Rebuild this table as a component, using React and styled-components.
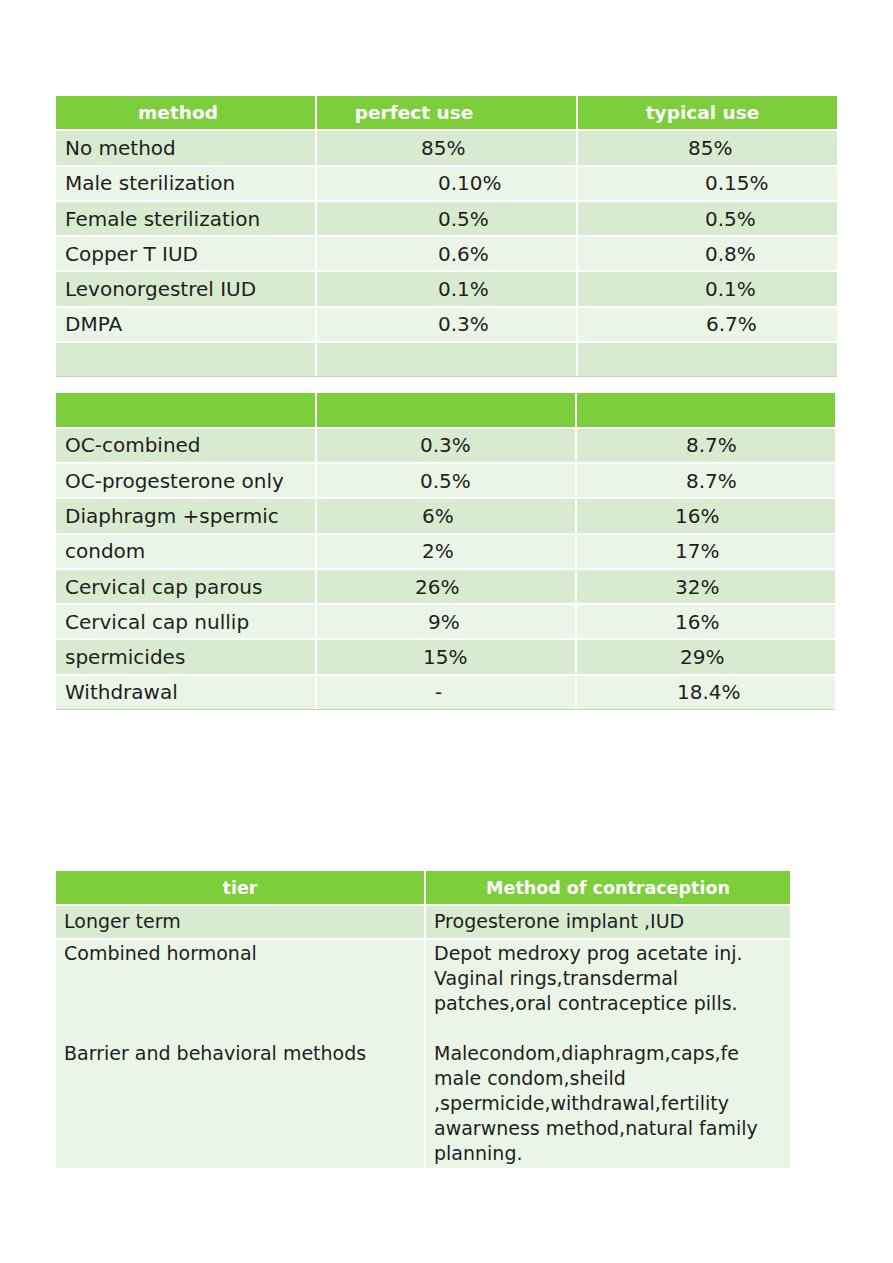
import { Fragment } from "react";
import styled, { createGlobalStyle } from "styled-components";

const GlobalStyle = createGlobalStyle`
    html, body {
        margin: 0;
        padding: 0;
        background: #ffffff;
    }
    body {
        font-family: "DejaVu Sans", "Liberation Sans", sans-serif;
        color: #1e1e1e;
    }
`;

const GREEN = "#7dce3b";
const DARK = "#d8ebd0";
const LIGHT = "#ebf5e7";

const Page = styled.div`
    display: flex;
    flex-direction: column;
    align-items: flex-start;
    padding: 96px 0 80px 56px;
`;

const Table = styled.div`
    display: grid;
    grid-template-columns: ${(p) => p.$cols};
    gap: 2px;
    background: #ffffff;
    margin-top: ${(p) => p.$top || 0}px;
    border-bottom: ${(p) => (p.$ruled ? "1px solid #c9d2c6" : "none")};
`;

const HeadCell = styled.div`
    height: ${(p) => p.$h || 33.3}px;
    background: ${GREEN};
    color: #ffffff;
    font-weight: bold;
    font-size: ${(p) => p.$size || 18.5}px;
    display: flex;
    align-items: center;
    justify-content: center;
    padding-right: ${(p) => p.$shift || 0}px;
    box-sizing: border-box;
`;

const Cell = styled.div`
    height: 33.3px;
    background: ${(p) => (p.$dark ? DARK : LIGHT)};
    display: flex;
    align-items: center;
    padding-left: ${(p) => p.$indent}px;
    font-size: 20px;
    white-space: nowrap;
    box-sizing: border-box;
`;

const TierCell = styled.div`
    background: ${(p) => (p.$dark ? DARK : LIGHT)};
    padding: ${(p) => (p.$tall ? "1px 0 2px 8px" : "0 0 0 8px")};
    height: ${(p) => (p.$tall ? "auto" : "31.5px")};
    display: flex;
    flex-direction: column;
    justify-content: ${(p) => (p.$tall ? "flex-start" : "center")};
    font-size: 19px;
    line-height: 25px;
    white-space: nowrap;
    box-sizing: border-box;
`;

const Line = styled.span`
    display: block;
    min-height: 25px;
`;

const firstRows = [
    ["No method", "85%", 104, "85%", 110],
    ["Male sterilization", "0.10%", 121, "0.15%", 127],
    ["Female sterilization", "0.5%", 121, "0.5%", 127],
    ["Copper T IUD", "0.6%", 121, "0.8%", 127],
    ["Levonorgestrel IUD", "0.1%", 121, "0.1%", 127],
    ["DMPA", "0.3%", 121, "6.7%", 128],
    ["", "", 0, "", 0],
];

const secondRows = [
    ["OC-combined", "0.3%", 103, "8.7%", 109],
    ["OC-progesterone only", "0.5%", 103, "8.7%", 109],
    ["Diaphragm +spermic", "6%", 105, "16%", 98],
    ["condom", "2%", 105, "17%", 98],
    ["Cervical cap parous", "26%", 98, "32%", 98],
    ["Cervical cap nullip", "9%", 111, "16%", 98],
    ["spermicides", "15%", 106, "29%", 103],
    ["Withdrawal", "-", 118, "18.4%", 100],
];

function Lines({ items }) {
    return items.map((t, i) => <Line key={i}>{t}</Line>);
}

function Rows({ rows }) {
    return rows.map((r, i) => (
        <Fragment key={i}>
            <Cell $dark={i % 2 === 0} $indent={9}>{r[0]}</Cell>
            <Cell $dark={i % 2 === 0} $indent={r[2]}>{r[1]}</Cell>
            <Cell $dark={i % 2 === 0} $indent={r[4]}>{r[3]}</Cell>
        </Fragment>
    ));
}

function App() {
    return (
        <>
            <GlobalStyle />
            <Page>
                <Table $cols="259px 259px 259px" $ruled>
                    <HeadCell $shift={15}>method</HeadCell>
                    <HeadCell $shift={65}>perfect use</HeadCell>
                    <HeadCell $shift={10}>typical use</HeadCell>
                    <Rows rows={firstRows} />
                </Table>

                <Table $cols="259px 258px 258px" $ruled $top={16}>
                    <HeadCell />
                    <HeadCell />
                    <HeadCell />
                    <Rows rows={secondRows} />
                </Table>

                <Table $cols="368px 364px" $top={161}>
                    <HeadCell $h={33} $size={17.5}>tier</HeadCell>
                    <HeadCell $h={33} $size={17.5}>Method of contraception</HeadCell>
                    <TierCell $dark>Longer term</TierCell>
                    <TierCell $dark>Progesterone implant ,IUD</TierCell>
                    <TierCell $tall>
                        <Lines items={["Combined hormonal", "", "", "", "Barrier and behavioral methods"]} />
                    </TierCell>
                    <TierCell $tall>
                        <Lines
                            items={[
                                "Depot medroxy prog acetate inj.",
                                "Vaginal rings,transdermal",
                                "patches,oral contraceptice pills.",
                                "",
                                "Malecondom,diaphragm,caps,fe",
                                "male condom,sheild",
                                ",spermicide,withdrawal,fertility",
                                "awarwness method,natural family",
                                "planning.",
                            ]}
                        />
                    </TierCell>
                </Table>
            </Page>
        </>
    );
}

export default App;
